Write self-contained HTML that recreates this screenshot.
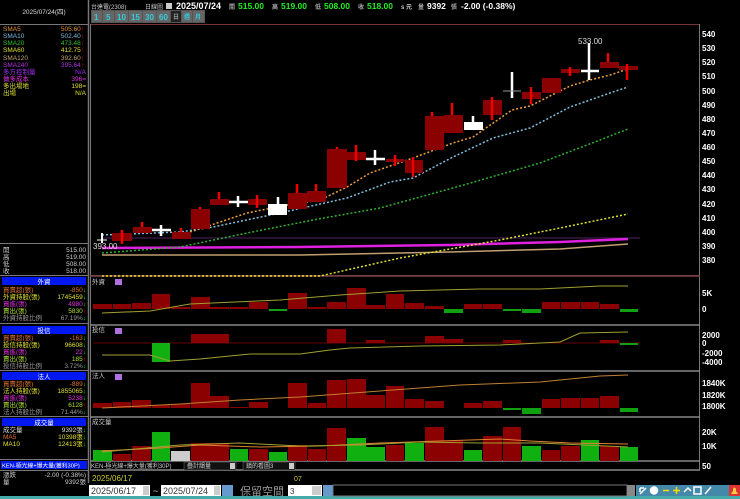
<!DOCTYPE html>
<html><head><meta charset="utf-8"><style>
html,body{margin:0;padding:0;background:#000;width:740px;height:499px;overflow:hidden}
svg{display:block}
text{font-family:"Liberation Sans","Noto Sans CJK TC",sans-serif}
.s{font-size:6.5px}
.ax{font-size:8px;fill:#fff;font-weight:bold}
</style></head><body>
<svg width="740" height="499" viewBox="0 0 740 499" xmlns="http://www.w3.org/2000/svg">
<rect width="740" height="499" fill="#000"/>
<line x1="88.5" y1="0" x2="88.5" y2="483" stroke="#777" stroke-width="1.5"/>
<line x1="0" y1="24.5" x2="88" y2="24.5" stroke="#777"/>
<text x="44" y="14" class="s" fill="#ddd" text-anchor="middle">2025/07/24(四)</text>
<g class="s">
<text x="3" y="31" fill="#e0903a">SMA5</text><text x="84" y="31" fill="#e0903a" text-anchor="end">505.60<tspan fill="#f00">↑</tspan></text>
<text x="3" y="38" fill="#7ab8e0">SMA10</text><text x="84" y="38" fill="#7ab8e0" text-anchor="end">502.40<tspan fill="#f00">↑</tspan></text>
<text x="3" y="45" fill="#30c030">SMA20</text><text x="84" y="45" fill="#30c030" text-anchor="end">473.48<tspan fill="#f00">↑</tspan></text>
<text x="3" y="52" fill="#e0e030">SMA60</text><text x="84" y="52" fill="#e0e030" text-anchor="end">412.75<tspan fill="#f00">↑</tspan></text>
<text x="3" y="60" fill="#c0a070">SMA120</text><text x="84" y="60" fill="#c0a070" text-anchor="end">392.60<tspan fill="#f00">↑</tspan></text>
<text x="3" y="67" fill="#b030e0">SMA240</text><text x="84" y="67" fill="#b030e0" text-anchor="end">395.64<tspan fill="#f00">↑</tspan></text>
<text x="3" y="74" fill="#a030f0">多方控制量</text><text x="86" y="74" fill="#a030f0" text-anchor="end">N/A</text>
<text x="3" y="81" fill="#e030e0">做多成本</text><text x="86" y="81" fill="#e030e0" text-anchor="end">396=</text>
<text x="3" y="88" fill="#e0e030">多出場地</text><text x="86" y="88" fill="#e0e030" text-anchor="end">198=</text>
<text x="3" y="95" fill="#e0e030">出場</text><text x="86" y="95" fill="#e0e030" text-anchor="end">N/A</text>
</g>
<line x1="0" y1="243.5" x2="88" y2="243.5" stroke="#777"/>
<g class="s" fill="#ccc">
<text x="3" y="252">開</text><text x="86" y="252" text-anchor="end">515.00</text>
<text x="3" y="259">高</text><text x="86" y="259" text-anchor="end">519.00</text>
<text x="3" y="266">低</text><text x="86" y="266" text-anchor="end">508.00</text>
<text x="3" y="273">收</text><text x="86" y="273" text-anchor="end">518.00</text>
</g>
<line x1="0" y1="275.5" x2="88" y2="275.5" stroke="#777"/>
<g class="s">
<rect x="2" y="277" width="84" height="8" fill="#0018f0"/><text x="44" y="284" fill="#fff" text-anchor="middle">外資</text>
<text x="3" y="292" fill="#e07030">買賣超(張)</text><text x="86" y="292" fill="#e07030" text-anchor="end">-850<tspan fill="#0f0">↓</tspan></text>
<text x="3" y="299" fill="#e0e030">外資持股(張)</text><text x="86" y="299" fill="#e0e030" text-anchor="end">1745459<tspan fill="#0f0">↓</tspan></text>
<text x="3" y="306" fill="#e030e0">買進(張)</text><text x="86" y="306" fill="#e030e0" text-anchor="end">4980<tspan fill="#0f0">↓</tspan></text>
<text x="3" y="313" fill="#b0e030">賣出(張)</text><text x="86" y="313" fill="#b0e030" text-anchor="end">5830<tspan fill="#f00">↑</tspan></text>
<text x="3" y="320" fill="#999">外資持股比例</text><text x="86" y="320" fill="#999" text-anchor="end">67.19%<tspan fill="#0f0">↓</tspan></text>
<line x1="0" y1="323.5" x2="88" y2="323.5" stroke="#777"/>
<rect x="2" y="326" width="84" height="8" fill="#0018f0"/><text x="44" y="333" fill="#fff" text-anchor="middle">投信</text>
<text x="3" y="340" fill="#e07030">買賣超(張)</text><text x="86" y="340" fill="#e07030" text-anchor="end">-163<tspan fill="#0f0">↓</tspan></text>
<text x="3" y="347" fill="#e0e030">投信持股(張)</text><text x="86" y="347" fill="#e0e030" text-anchor="end">96608<tspan fill="#0f0">↓</tspan></text>
<text x="3" y="354" fill="#e030e0">買進(張)</text><text x="86" y="354" fill="#e030e0" text-anchor="end">22<tspan fill="#0f0">↓</tspan></text>
<text x="3" y="361" fill="#b0e030">賣出(張)</text><text x="86" y="361" fill="#b0e030" text-anchor="end">185<tspan fill="#f00">↑</tspan></text>
<text x="3" y="368" fill="#999">投信持股比例</text><text x="86" y="368" fill="#999" text-anchor="end">3.72%<tspan fill="#0f0">↓</tspan></text>
<line x1="0" y1="370.5" x2="88" y2="370.5" stroke="#777"/>
<rect x="2" y="372" width="84" height="8" fill="#0018f0"/><text x="44" y="379" fill="#fff" text-anchor="middle">法人</text>
<text x="3" y="386" fill="#e07030">買賣超(張)</text><text x="86" y="386" fill="#e07030" text-anchor="end">-889<tspan fill="#0f0">↓</tspan></text>
<text x="3" y="393" fill="#e0e030">法人持股(張)</text><text x="86" y="393" fill="#e0e030" text-anchor="end">1855065<tspan fill="#0f0">↓</tspan></text>
<text x="3" y="400" fill="#e030e0">買進(張)</text><text x="86" y="400" fill="#e030e0" text-anchor="end">5238<tspan fill="#0f0">↓</tspan></text>
<text x="3" y="407" fill="#b0e030">賣出(張)</text><text x="86" y="407" fill="#b0e030" text-anchor="end">6128<tspan fill="#f00">↑</tspan></text>
<text x="3" y="414" fill="#999">法人持股比例</text><text x="86" y="414" fill="#999" text-anchor="end">71.44%<tspan fill="#0f0">↓</tspan></text>
<line x1="0" y1="416.5" x2="88" y2="416.5" stroke="#777"/>
<rect x="2" y="418" width="84" height="8" fill="#0018f0"/><text x="44" y="425" fill="#fff" text-anchor="middle">成交量</text>
<text x="3" y="432" fill="#ddd">成交量</text><text x="86" y="432" fill="#ddd" text-anchor="end">9392張<tspan fill="#0f0">↓</tspan></text>
<text x="3" y="439" fill="#e07030">MA5</text><text x="86" y="439" fill="#e0e030" text-anchor="end">10398張<tspan fill="#0f0">↓</tspan></text>
<text x="3" y="446" fill="#e0e030">MA10</text><text x="86" y="446" fill="#e0e030" text-anchor="end">12413張<tspan fill="#0f0">↓</tspan></text>
<line x1="0" y1="459.5" x2="88" y2="459.5" stroke="#777"/>
<rect x="1" y="461" width="86" height="8" fill="#0018f0"/><text x="2" y="467.5" fill="#fff" font-size="5.8">KEN-極光線+爆大量(獲利30P)</text>
<line x1="0" y1="470.5" x2="88" y2="470.5" stroke="#777"/>
<text x="3" y="477" fill="#ccc">漲跌</text><text x="86" y="477" fill="#ccc" text-anchor="end">-2.00 (-0.38%)</text>
<text x="3" y="484" fill="#ccc">量</text><text x="86" y="484" fill="#ccc" text-anchor="end">9392張</text>
</g>
<!-- top header -->
<text x="91" y="9" font-size="6" fill="#ccc">台達電(2308)</text>
<text x="145" y="9" font-size="6" fill="#ccc">日線圖</text>
<rect x="166" y="3" width="6" height="6" fill="#ccc"/>
<text x="176" y="9" font-size="9" font-weight="bold" fill="#fff">2025/07/24</text>
<g font-size="8.5" font-weight="bold">
<text x="229" y="9" fill="#aaa" font-size="6">開</text><text x="238" y="9" fill="#2e2">515.00</text>
<text x="272" y="9" fill="#aaa" font-size="6">高</text><text x="281" y="9" fill="#2e2">519.00</text>
<text x="315" y="9" fill="#aaa" font-size="6">低</text><text x="324" y="9" fill="#2e2">508.00</text>
<text x="358" y="9" fill="#aaa" font-size="6">收</text><text x="367" y="9" fill="#2e2">518.00</text>
<text x="401" y="9" fill="#ccc" font-size="6">s 元</text>
<text x="418" y="9" fill="#aaa" font-size="6">量</text><text x="427" y="9" fill="#fff">9392</text><text x="451" y="9" fill="#aaa" font-size="6">張</text>
<text x="461" y="9" fill="#fff">-2.00 (-0.38%)</text>
</g>
<rect x="91" y="10" width="114" height="13" fill="#555"/>
<g font-size="8" fill="#3cd" font-weight="bold">
<rect x="92" y="11" width="10" height="11" fill="#666"/><text x="94" y="20">1</text>
<rect x="103" y="11" width="11" height="11" fill="#666"/><text x="106" y="20">5</text>
<rect x="115" y="11" width="13" height="11" fill="#666"/><text x="117" y="20">10</text>
<rect x="129" y="11" width="13" height="11" fill="#666"/><text x="131" y="20">15</text>
<rect x="143" y="11" width="13" height="11" fill="#666"/><text x="145" y="20">30</text>
<rect x="157" y="11" width="13" height="11" fill="#666"/><text x="159" y="20">60</text>
<rect x="171" y="11" width="10" height="11" fill="#222"/><text x="173" y="19" font-size="6" fill="#999">日</text>
<rect x="182" y="11" width="10" height="11" fill="#666"/><text x="184" y="19" font-size="6">週</text>
<rect x="193" y="11" width="11" height="11" fill="#666"/><text x="195" y="19" font-size="6">月</text>
</g>
<rect x="90.5" y="24.5" width="609" height="251" fill="none" stroke="#733"/>
<line x1="90.5" y1="24" x2="90.5" y2="470" stroke="#777"/>
<line x1="699.5" y1="24" x2="699.5" y2="470" stroke="#777"/>
<g stroke="#888" stroke-width="1.5">
<line x1="90" y1="276" x2="700" y2="276" stroke="#744"/>
<line x1="90" y1="325" x2="700" y2="325"/>
<line x1="90" y1="371" x2="700" y2="371"/>
<line x1="90" y1="417" x2="700" y2="417"/>
<line x1="90" y1="461" x2="700" y2="461"/>
<line x1="90" y1="470" x2="700" y2="470"/>
</g>
<g class="ax">
<text x="702" y="37">540</text><text x="702" y="51">530</text><text x="702" y="65">520</text><text x="702" y="79">510</text>
<text x="702" y="94">500</text><text x="702" y="108">490</text><text x="702" y="122">480</text><text x="702" y="136">470</text>
<text x="702" y="150">460</text><text x="702" y="164">450</text><text x="702" y="178">440</text><text x="702" y="192">430</text>
<text x="702" y="207">420</text><text x="702" y="221">410</text><text x="702" y="235">400</text><text x="702" y="249">390</text>
<text x="702" y="263">380</text>
<text x="702" y="296">5K</text><text x="702" y="312">0</text>
<text x="702" y="338">2000</text><text x="702" y="346">0</text><text x="702" y="356">-2000</text><text x="702" y="365">-4000</text>
<text x="702" y="386">1840K</text><text x="702" y="398">1820K</text><text x="702" y="409">1800K</text>
<text x="702" y="435">20K</text><text x="702" y="449">10K</text><text x="702" y="469">50</text>
</g>
<line x1="102" y1="238" x2="640" y2="238" stroke="#502060" stroke-width="1"/>
<polyline fill="none" stroke="#e020e0" stroke-width="2.5" points="102,248 300,247 450,245 560,242 628,239"/>
<polyline fill="none" stroke="#c0a070" stroke-width="1.5" points="102,255 300,255 450,252 560,249 628,244"/>
<polyline fill="none" stroke="#e0e030" stroke-width="1.5" stroke-dasharray="2,2" points="102,276 320,276 400,258 500,240 560,228 628,214"/>
<polyline fill="none" stroke="#30b030" stroke-width="1.5" stroke-dasharray="2,2" points="102,253 180,247 247,233 313,220 380,208 460,186 540,163 600,140 628,129"/>
<polyline fill="none" stroke="#80c0e0" stroke-width="1.5" stroke-dasharray="2,2" points="102,235 180,232 213,227 280,213 347,198 390,182 413,178 453,157 493,138 530,128 570,107 610,93 628,87"/>
<polyline fill="none" stroke="#f0a040" stroke-width="1.5" stroke-dasharray="2,2" points="190,232 247,213 287,205 320,200 347,187 370,173 413,158 453,143 473,137 512,110 530,106 570,86 590,80 610,75 628,69"/>
<g fill="#8b0000" stroke="none">
<rect x="112" y="233" width="20" height="8"/><rect x="133" y="227" width="19" height="6"/><rect x="172" y="232" width="19" height="7"/>
<rect x="191" y="209" width="19" height="20"/><rect x="210" y="199" width="19" height="6"/><rect x="248" y="199" width="19" height="6"/>
<rect x="288" y="193" width="19" height="16"/><rect x="307" y="191" width="19" height="11"/><rect x="327" y="149" width="20" height="39"/>
<rect x="347" y="152" width="19" height="8"/><rect x="386" y="159" width="18" height="3"/><rect x="405" y="160" width="18" height="13"/>
<rect x="425" y="116" width="19" height="34"/><rect x="444" y="115" width="19" height="18"/><rect x="483" y="100" width="19" height="15"/>
<rect x="522" y="92" width="19" height="7"/><rect x="542" y="78" width="19" height="15"/><rect x="561" y="69" width="19" height="4"/>
<rect x="600" y="62" width="19" height="6"/><rect x="619" y="66" width="19" height="4"/>
</g>
<g stroke="#e00" stroke-width="2.5">
<line x1="122" y1="230" x2="122" y2="244"/><line x1="142" y1="222" x2="142" y2="227"/><line x1="181" y1="228" x2="181" y2="232"/>
<line x1="200" y1="207" x2="200" y2="209"/><line x1="219" y1="192" x2="219" y2="199"/><line x1="257" y1="195" x2="257" y2="208"/>
<line x1="297" y1="184" x2="297" y2="193"/><line x1="316" y1="184" x2="316" y2="191"/><line x1="337" y1="147" x2="337" y2="149"/>
<line x1="356" y1="145" x2="356" y2="161"/><line x1="395" y1="155" x2="395" y2="166"/><line x1="413" y1="157" x2="413" y2="177"/>
<line x1="432" y1="112" x2="432" y2="116"/><line x1="452" y1="103" x2="452" y2="115"/><line x1="492" y1="97" x2="492" y2="120"/>
<line x1="531" y1="87" x2="531" y2="104"/><line x1="570" y1="67" x2="570" y2="76"/><line x1="608" y1="53" x2="608" y2="62"/>
<line x1="627" y1="64" x2="627" y2="80"/>
</g>
<g fill="#fff" stroke="#fff">
<line x1="102" y1="233" x2="102" y2="243" stroke-width="2"/><line x1="97" y1="240" x2="107" y2="240" stroke-width="1"/>
<line x1="161" y1="225" x2="161" y2="236" stroke-width="2.5"/><line x1="152" y1="230" x2="171" y2="230" stroke-width="2.5"/>
<line x1="238" y1="196" x2="238" y2="207" stroke-width="2.5"/><line x1="229" y1="202" x2="248" y2="202" stroke-width="2.5"/>
<line x1="278" y1="197" x2="278" y2="204" stroke-width="2.5"/><rect x="268" y="204" width="19" height="11" stroke="none"/>
<line x1="375" y1="150" x2="375" y2="165" stroke-width="2.5"/><line x1="366" y1="159" x2="385" y2="159" stroke-width="2.5"/>
<line x1="473" y1="116" x2="473" y2="122" stroke-width="2.5"/><rect x="464" y="122" width="19" height="8" stroke="none"/>
<line x1="512" y1="72" x2="512" y2="98" stroke-width="2.5"/><line x1="503" y1="91" x2="521" y2="91" stroke="#999" stroke-width="1"/>
<line x1="589" y1="43" x2="589" y2="80" stroke-width="2.5"/><line x1="581" y1="71" x2="599" y2="71" stroke-width="2.5"/>
</g>
<text x="578" y="44" font-size="8" fill="#ddd">533.00</text>
<text x="93" y="249" font-size="8" fill="#ddd">393.00</text>
<g class="s" fill="#ccc">
<text x="92" y="284">外資</text><text x="92" y="332">投信</text><text x="92" y="378">法人</text><text x="92" y="424">成交量</text>
</g>
<g fill="#b070e0"><rect x="115" y="279" width="7" height="6"/><rect x="115" y="328" width="7" height="6"/><rect x="115" y="374" width="7" height="6"/></g>
<g fill="#8b0000">
<rect x="93" y="304" width="19" height="5"/><rect x="113" y="304" width="18" height="5"/><rect x="132" y="303" width="19" height="6"/>
<rect x="152" y="294" width="18" height="15"/><rect x="171" y="307" width="19" height="2"/><rect x="191" y="297" width="19" height="12"/>
<rect x="210" y="307" width="19" height="2"/><rect x="230" y="307" width="18" height="2"/><rect x="249" y="302" width="19" height="7"/>
<rect x="288" y="293" width="19" height="16"/><rect x="308" y="307" width="18" height="2"/><rect x="327" y="302" width="19" height="7"/>
<rect x="347" y="288" width="19" height="21"/><rect x="366" y="305" width="19" height="4"/><rect x="386" y="294" width="18" height="15"/>
<rect x="405" y="303" width="19" height="6"/><rect x="425" y="306" width="19" height="3"/><rect x="464" y="304" width="18" height="5"/>
<rect x="483" y="304" width="19" height="5"/><rect x="542" y="302" width="18" height="7"/><rect x="561" y="302" width="19" height="7"/>
<rect x="581" y="302" width="18" height="7"/><rect x="600" y="304" width="19" height="5"/>
</g>
<g fill="#10a010">
<rect x="269" y="309" width="18" height="2"/><rect x="444" y="309" width="19" height="4"/><rect x="503" y="309" width="18" height="2"/>
<rect x="522" y="309" width="19" height="4"/><rect x="620" y="309" width="18" height="3"/>
</g>
<polyline fill="none" stroke="#a0a030" stroke-width="1" points="102,313 150,311 190,304 280,300 340,295 400,291 480,289 540,289 600,286 628,286"/>
<line x1="93" y1="343" x2="640" y2="343" stroke="#600" stroke-width="1"/>
<g fill="#8b0000">
<rect x="191" y="334" width="19" height="9"/><rect x="210" y="334" width="19" height="9"/><rect x="327" y="329" width="19" height="14"/>
<rect x="366" y="340" width="19" height="3"/><rect x="425" y="336" width="19" height="7"/><rect x="444" y="339" width="19" height="4"/>
<rect x="503" y="340" width="18" height="3"/><rect x="600" y="340" width="19" height="3"/>
</g>
<rect x="152" y="343" width="18" height="19" fill="#10b010"/><rect x="620" y="343" width="18" height="2" fill="#10a010"/>
<polyline fill="none" stroke="#a0a030" stroke-width="1" points="102,355 150,355 170,361 200,359 250,354 300,354 330,350 350,348 420,346 500,345 560,342 580,333 628,332"/>
<g fill="#8b0000">
<rect x="93" y="403" width="19" height="5"/><rect x="113" y="402" width="18" height="6"/><rect x="132" y="400" width="19" height="8"/>
<rect x="152" y="405" width="18" height="3"/><rect x="171" y="404" width="19" height="4"/><rect x="191" y="383" width="19" height="25"/>
<rect x="210" y="396" width="19" height="12"/><rect x="230" y="407" width="18" height="1"/><rect x="249" y="402" width="19" height="6"/>
<rect x="288" y="383" width="19" height="25"/><rect x="308" y="403" width="18" height="5"/><rect x="327" y="380" width="19" height="28"/>
<rect x="347" y="379" width="19" height="29"/><rect x="366" y="395" width="19" height="13"/><rect x="386" y="386" width="18" height="22"/>
<rect x="405" y="399" width="19" height="9"/><rect x="425" y="401" width="19" height="7"/><rect x="464" y="403" width="18" height="5"/>
<rect x="483" y="401" width="19" height="7"/><rect x="542" y="399" width="18" height="9"/><rect x="561" y="398" width="19" height="10"/>
<rect x="581" y="398" width="18" height="10"/><rect x="600" y="396" width="19" height="12"/>
</g>
<g fill="#10a010"><rect x="503" y="408" width="18" height="2"/><rect x="522" y="408" width="19" height="6"/><rect x="620" y="408" width="18" height="4"/></g>
<polyline fill="none" stroke="#c08030" stroke-width="1" points="102,408 180,404 240,400 300,397 380,391 460,385 540,382 600,376 628,375"/>
<g fill="#10b010">
<rect x="93" y="450" width="19" height="11"/><rect x="152" y="432" width="18" height="29"/><rect x="230" y="449" width="18" height="12"/>
<rect x="269" y="452" width="18" height="9"/><rect x="347" y="438" width="19" height="23"/><rect x="366" y="447" width="19" height="14"/>
<rect x="405" y="443" width="19" height="18"/><rect x="464" y="450" width="18" height="11"/><rect x="522" y="446" width="19" height="15"/>
<rect x="581" y="440" width="18" height="21"/><rect x="620" y="447" width="18" height="14"/>
</g>
<rect x="171" y="451" width="19" height="10" fill="#ccc"/>
<g fill="#8b0000">
<rect x="113" y="454" width="18" height="7"/><rect x="132" y="446" width="19" height="15"/><rect x="191" y="443" width="19" height="18"/>
<rect x="210" y="443" width="19" height="18"/><rect x="249" y="449" width="19" height="12"/><rect x="288" y="445" width="19" height="16"/>
<rect x="308" y="449" width="18" height="12"/><rect x="327" y="428" width="19" height="33"/><rect x="386" y="445" width="18" height="16"/>
<rect x="425" y="427" width="19" height="34"/><rect x="444" y="441" width="19" height="20"/><rect x="483" y="436" width="19" height="25"/>
<rect x="503" y="427" width="18" height="34"/><rect x="542" y="450" width="18" height="11"/><rect x="561" y="446" width="19" height="15"/>
<rect x="600" y="446" width="19" height="15"/>
</g>
<polyline fill="none" stroke="#e08030" stroke-width="1" points="102,451 160,448 200,445 260,447 320,446 380,443 440,441 500,439 530,441 570,443 628,444"/>
<polyline fill="none" stroke="#a0a030" stroke-width="1" points="102,452 180,445 240,443 300,446 360,445 420,442 480,443 540,443 628,447"/>
<text x="91" y="468" font-size="6" fill="#ccc">KEN-極光線+爆大量(獲利30P)</text>
<rect x="184" y="462" width="52" height="8" fill="#111" stroke="#777" stroke-width="0.5"/><text x="187" y="468" font-size="6" fill="#ccc">疊計韻量</text><rect x="230" y="463" width="5" height="6" fill="#ccc"/>
<rect x="243" y="462" width="52" height="8" fill="#111" stroke="#777" stroke-width="0.5"/><text x="246" y="468" font-size="6" fill="#ccc">鎮的看圖3</text><rect x="289" y="463" width="5" height="6" fill="#ccc"/>
<text x="92" y="481" font-size="8" fill="#cc3">2025/06/17</text>
<text x="294" y="481" font-size="7" fill="#cc3">07</text>
<rect x="0" y="496" width="740" height="3" fill="#4aa"/>
<rect x="89" y="485" width="61" height="11" fill="#fff"/><text x="91" y="494" font-size="9" fill="#333">2025/06/17</text><rect x="143" y="486" width="6" height="9" fill="#ccc"/>
<text x="153" y="494" font-size="9" fill="#ccc">~</text>
<rect x="161" y="485" width="60" height="11" fill="#fff"/><text x="163" y="494" font-size="9" fill="#333">2025/07/24</text><rect x="214" y="486" width="6" height="9" fill="#ccc"/>
<rect x="222" y="485" width="11" height="11" fill="#69c"/>
<text x="240" y="495" font-size="11" fill="#999">保留空間</text>
<rect x="288" y="485" width="34" height="11" fill="#fff"/><text x="290" y="494" font-size="8" fill="#333">3</text><rect x="312" y="486" width="9" height="9" fill="#ccc"/>
<rect x="323" y="485" width="10" height="11" fill="#69c"/>
<rect x="333" y="485" width="294" height="11" fill="#000" stroke="#777"/><rect x="627" y="485" width="8" height="11" fill="#888"/>
<rect x="636" y="485" width="104" height="11" fill="#48a"/>
<g stroke="#fff" stroke-width="1.5" fill="none">
<path d="M640 494 L646 488 M640 488 H644 M640 488 V492"/><circle cx="654" cy="490.5" r="3.5" fill="#fff"/><path d="M663 490.5 H669" stroke="#fd0"/><path d="M673 490.5 H680 M676.5 487 V494" stroke="#fd0"/>
<path d="M684 492 L688 488 L691 491"/><rect x="694" y="487" width="7" height="7"/><path d="M705 494 L711 487"/>
</g>
<rect x="729" y="485" width="11" height="11" fill="#d33"/><path d="M731 494 H738 L736 491 V489 Q734.5 486 733 489 V491 Z" fill="#fc4"/>
</svg>
</body></html>
